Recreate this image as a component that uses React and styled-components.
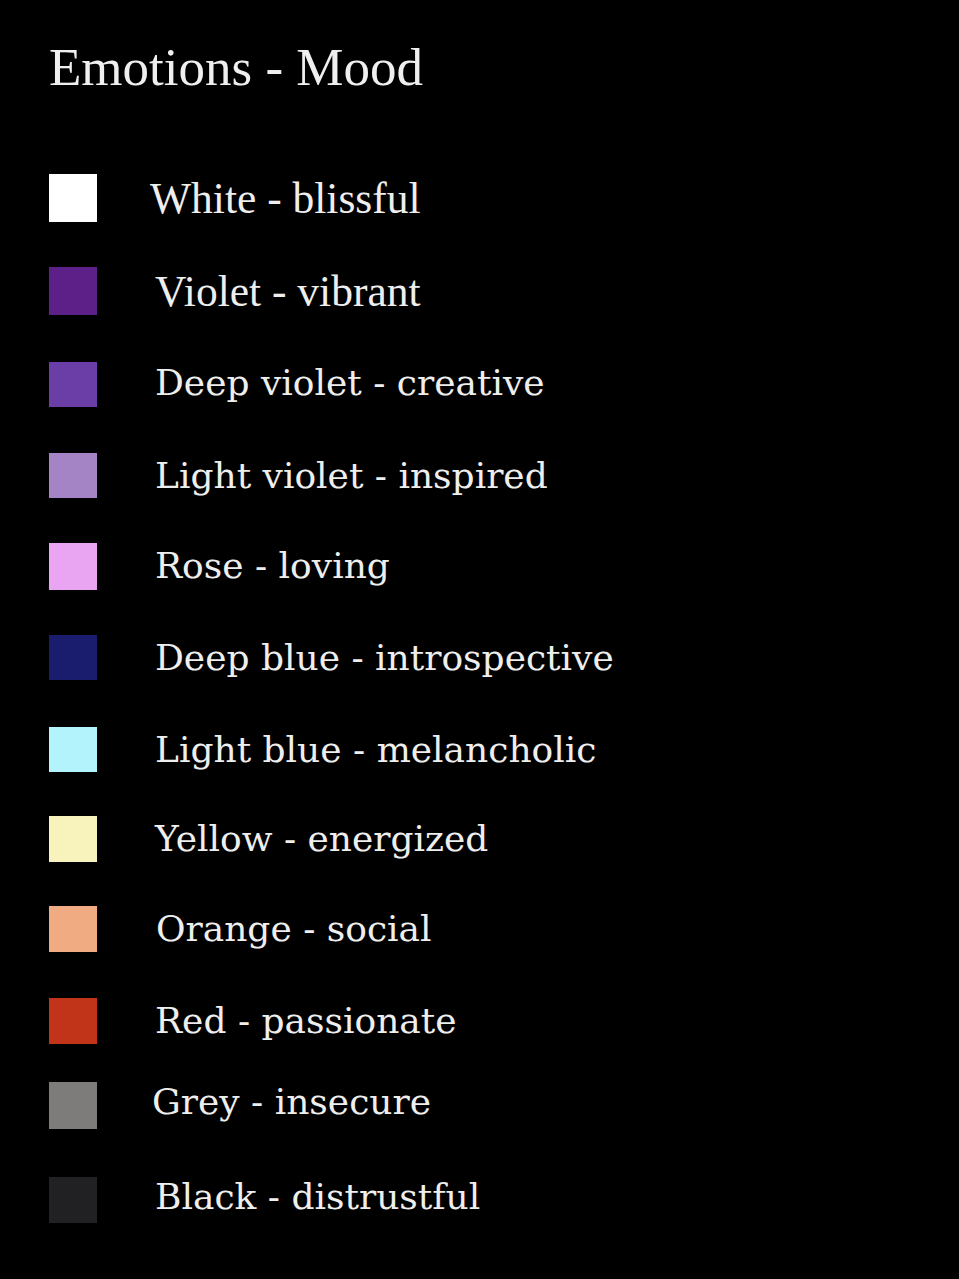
import React from "react";
import styled, { createGlobalStyle } from "styled-components";

const Global = createGlobalStyle`
  html, body { margin: 0; padding: 0; background: #000; }
  body { min-height: 1279px; }
`;

const Page = styled.main`
  background: #000;
  min-height: 1279px;
  padding: 41px 0 0 49px;
  box-sizing: border-box;
`;

const Title = styled.h1`
  margin: 0;
  font-family: "Liberation Serif", "Times New Roman", serif;
  font-weight: 400;
  font-size: 53px;
  line-height: 53px;
  color: #efefef;
  letter-spacing: 0;
`;

const List = styled.ul`
  list-style: none;
  margin: 0;
  padding: 0;
  display: flex;
  flex-direction: column;
`;

const Row = styled.li`
  display: flex;
  align-items: center;
  margin-top: ${(p) => p.$offset}px;
`;

const Swatch = styled.span`
  flex: none;
  width: 48px;
  height: ${(p) => p.$h}px;
  background: ${(p) => p.$color};
`;

const Label = styled.span`
  margin-left: ${(p) => p.$indent}px;
  margin-bottom: ${(p) => p.$lift}px;
  color: #eeeeee;
  white-space: nowrap;
  font-family: ${(p) =>
    p.$classic
      ? '"Liberation Serif", "Times New Roman", serif'
      : '"DejaVu Serif", "Liberation Serif", serif'};
  font-size: ${(p) => (p.$classic ? 43.5 : 36)}px;
  line-height: 30px;
`;

const moods = [
  { label: "White - blissful", color: "#ffffff", top: 174, h: 48, classic: true, x: 150 },
  { label: "Violet - vibrant", color: "#5d2089", top: 267, h: 48, classic: true, x: 155 },
  { label: "Deep violet - creative", color: "#6a3ea6", top: 362, h: 45, x: 155, lift: 4 },
  { label: "Light violet - inspired", color: "#a584c6", top: 453, h: 45, x: 155 },
  { label: "Rose - loving", color: "#e9a5f1", top: 543, h: 47, x: 155, lift: 2 },
  { label: "Deep blue - introspective", color: "#1a1c6d", top: 635, h: 45, x: 155 },
  { label: "Light blue - melancholic", color: "#b3f4fc", top: 727, h: 45, x: 155 },
  { label: "Yellow - energized", color: "#f8f2bc", top: 816, h: 46, x: 155 },
  { label: "Orange - social", color: "#f0ab82", top: 906, h: 46, x: 156 },
  { label: "Red - passionate", color: "#c2341a", top: 998, h: 46, x: 155 },
  { label: "Grey - insecure", color: "#7e7b7b", top: 1082, h: 47, x: 152, lift: 8 },
  { label: "Black - distrustful", color: "#212123", top: 1177, h: 46, x: 155, lift: 7 },
];

export default function App() {
  let prevBottom = 94;
  return (
    <Page>
      <Global />
      <Title>Emotions - Mood</Title>
      <List>
        {moods.map((m) => {
          const offset = m.top - prevBottom;
          prevBottom = m.top + m.h;
          return (
            <Row key={m.label} $offset={offset}>
              <Swatch $color={m.color} $h={m.h} />
              <Label $indent={m.x - 97} $classic={m.classic} $lift={m.lift || 0}>
                {m.label}
              </Label>
            </Row>
          );
        })}
      </List>
    </Page>
  );
}
